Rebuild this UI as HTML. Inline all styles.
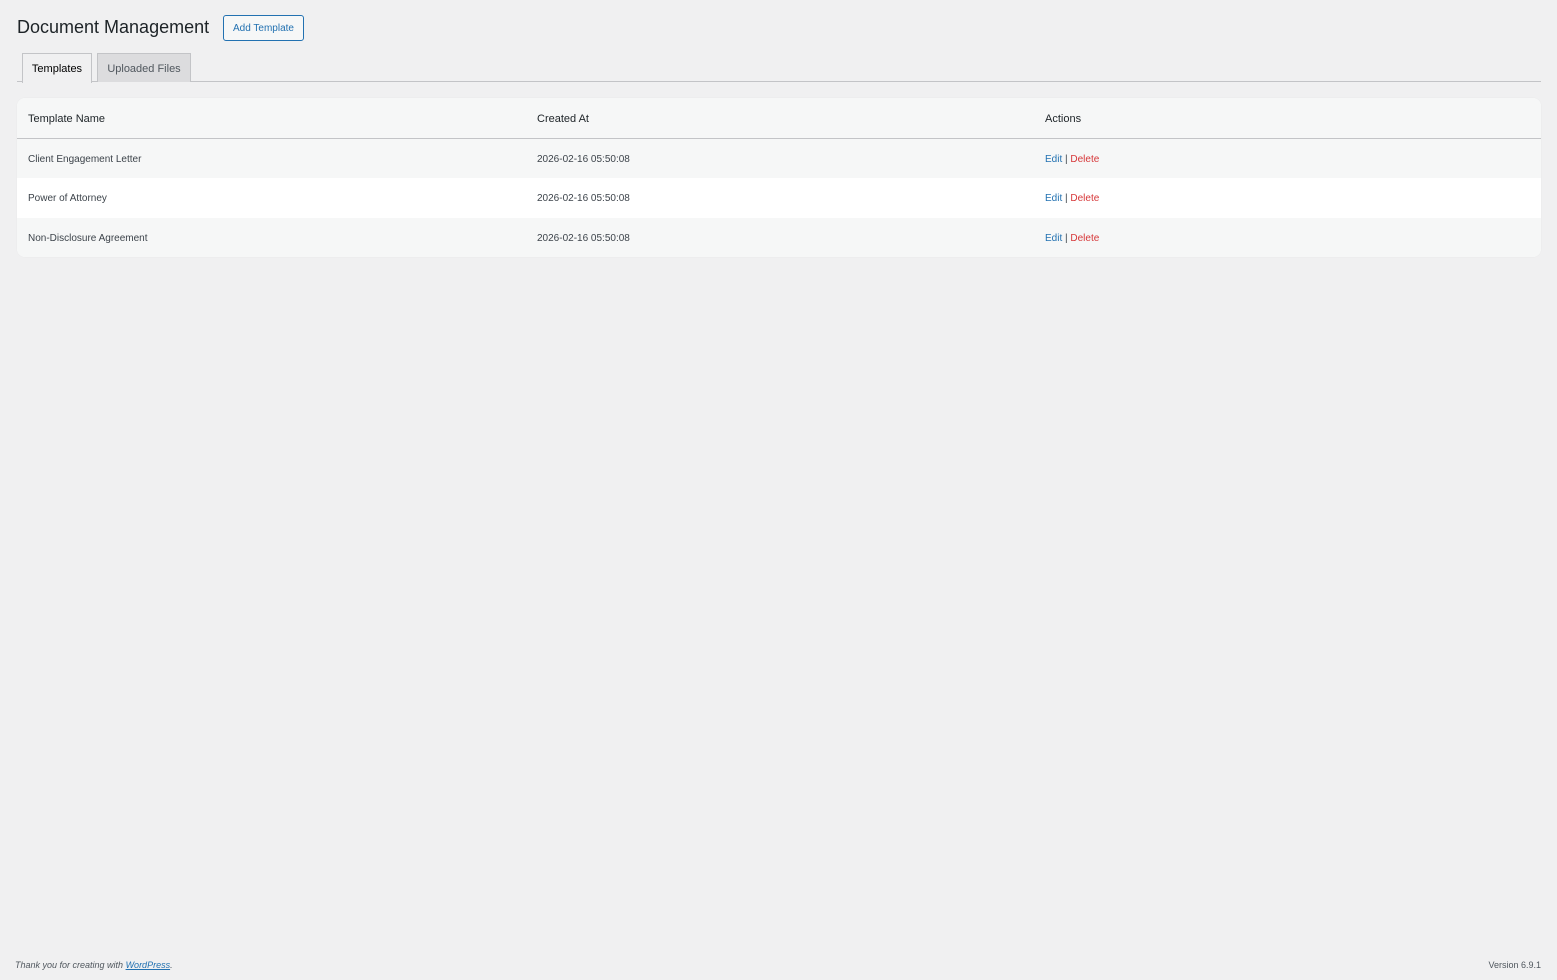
<!DOCTYPE html>
<html><head><style>
body{margin:0;background:#f0f0f1;font-family:"Liberation Sans",sans-serif;color:#1d2327;width:1557px;height:980px;position:relative;overflow:hidden}
.h1{position:absolute;left:17px;top:17px;font-size:18px;color:#1d2327}
.btn{position:absolute;left:223px;top:15px;width:79px;height:24px;border:1px solid #2271b1;border-radius:3px;color:#2271b1;font-size:10px;line-height:25px;text-align:center;background:#f6f7f7}
.tabline{position:absolute;left:17px;top:81px;width:1524px;height:1px;background:#c3c4c7}
.tab{position:absolute;top:53px;height:28px;border:1px solid #c3c4c7;border-bottom:none;font-size:11px;line-height:30px;text-align:center}
.t1{left:22px;width:68px;background:#f0f0f1;height:29px;color:#000}
.t2{left:97px;width:92px;background:#dcdcde;color:#50575e}
.tbl{position:absolute;left:17px;top:98px;width:1524px;height:159px;border-radius:8px;overflow:hidden;background:#fff;box-shadow:0 0 1px rgba(0,0,0,.08)}
.row{position:absolute;left:0;width:1524px;font-size:10px;color:#3c434a}
.row span{position:absolute;top:1px}
.hd{top:0;height:40px;line-height:40px;background:#f6f7f7;border-bottom:1px solid #c3c4c7;font-size:11px;color:#1d2327}
.c1{left:11px}.c2{left:520px}.c3{left:1028px}
a{text-decoration:none}
.e{color:#2271b1}.d{color:#d63638}
.foot{position:absolute;top:960px;font-size:9px;color:#50575e}
</style></head><body>
<div class="h1">Document Management</div>
<div class="btn">Add Template</div>
<div class="tabline"></div>
<div class="tab t1">Templates</div>
<div class="tab t2">Uploaded Files</div>
<div class="tbl">
<div class="row hd"><span class="c1">Template Name</span><span class="c2">Created At</span><span class="c3">Actions</span></div>
<div class="row" style="top:41px;height:39px;line-height:39px;background:#f6f7f7"><span class="c1">Client Engagement Letter</span><span class="c2">2026-02-16 05:50:08</span><span class="c3"><a class="e">Edit</a> | <a class="d">Delete</a></span></div>
<div class="row" style="top:80px;height:40px;line-height:39px;background:#fff"><span class="c1">Power of Attorney</span><span class="c2">2026-02-16 05:50:08</span><span class="c3"><a class="e">Edit</a> | <a class="d">Delete</a></span></div>
<div class="row" style="top:120px;height:39px;line-height:39px;background:#f6f7f7"><span class="c1">Non-Disclosure Agreement</span><span class="c2">2026-02-16 05:50:08</span><span class="c3"><a class="e">Edit</a> | <a class="d">Delete</a></span></div>
</div>
<div class="foot" style="left:15px;font-style:italic">Thank you for creating with <a class="e" style="text-decoration:underline">WordPress</a>.</div>
<div class="foot" style="right:16px">Version 6.9.1</div>
</body></html>
